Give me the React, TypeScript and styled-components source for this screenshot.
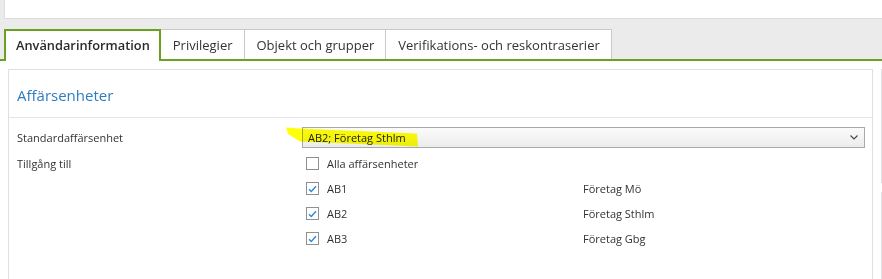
import React from 'react';
import styled, { createGlobalStyle } from 'styled-components';

const GlobalStyle = createGlobalStyle`
  html, body { margin: 0; padding: 0; background: #ffffff; }
  body {
    font-family: "Open Sans", "Noto Sans", sans-serif;
    color: #333333;
    width: 882px;
    height: 279px;
    overflow: hidden;
  }
`;

const Page = styled.div`
  width: 882px;
  height: 279px;
  overflow: hidden;
  background: #ffffff;
`;

const Header = styled.div`
  background: #ebebeb;
  display: flex;
  flex-direction: column;
`;

const TopCard = styled.div`
  margin-left: 4px;
  height: 18px;
  background: #ffffff;
  border-left: 1px solid #dcdcdc;
  border-bottom: 1px solid #dcdcdc;
`;

const TabBar = styled.div`
  display: flex;
  align-items: flex-end;
  padding: 10px 0 0 4px;
  border-bottom: 2px solid #6aa121;
`;

const Tab = styled.div<{ $active?: boolean }>`
  box-sizing: border-box;
  display: flex;
  align-items: center;
  background: #ffffff;
  font-size: 13px;
  white-space: nowrap;
  color: #333333;
  ${(p) =>
    p.$active
      ? `
    height: 32px;
    margin-bottom: -2px;
    padding: 0 9px 2px 10px;
    border: 2px solid #6aa121;
    border-bottom: none;
    font-weight: 600;
    font-size: 12.8px;
    color: #2b2b2b;
  `
      : `
    height: 30px;
    padding: 0 11px 0 12px;
    border-top: 1px solid #c9c9c9;
    border-right: 1px solid #c9c9c9;
  `}
`;

const Content = styled.div`
  display: flex;
  gap: 8px;
  padding: 8px 0 0 8px;
`;

const Panel = styled.section`
  box-sizing: border-box;
  width: 865px;
  flex: none;
  height: 230px;
  border: 1px solid #dde1e5;
  border-bottom: none;
`;

const PanelTitle = styled.h2`
  margin: 0;
  height: 48px;
  box-sizing: border-box;
  display: flex;
  align-items: center;
  padding: 2px 8px 0;
  font-size: 15px;
  font-weight: 400;
  color: #2f7dc0;
  border-bottom: 1px solid #e3e6e9;
`;

const SideColumn = styled.div`
  display: flex;
  flex-direction: column;
  gap: 9px;
  flex: 1;
`;

const SideBox = styled.div<{ $h: number }>`
  height: ${(p) => p.$h}px;
  border-left: 1px solid #dde1e5;
`;

const FormGrid = styled.div`
  display: grid;
  grid-template-columns: 285px 1fr;
  padding: 9px 7px 0 8px;
  row-gap: 3px;
`;

const Label = styled.div`
  font-size: 11px;
  line-height: 21px;
  color: #333333;
`;

const LabelTop = styled(Label)`
  line-height: 25px;
`;

const SelectWrap = styled.div`
  position: relative;
`;

const Select = styled.div`
  box-sizing: border-box;
  height: 21px;
  display: flex;
  align-items: center;
  justify-content: space-between;
  padding: 0 6px 0 5px;
  border: 1px solid #a9a9a9;
  background: linear-gradient(#fbfbfb, #ececec);
  font-size: 11px;
  color: #222222;
`;

const Highlight = styled.svg`
  position: absolute;
  left: -16px;
  top: 0px;
  width: 140px;
  height: 22px;
  mix-blend-mode: multiply;
  pointer-events: none;
`;

const CheckList = styled.div`
  display: flex;
  flex-direction: column;
`;

const CheckRow = styled.div`
  display: grid;
  grid-template-columns: 277px 1fr;
  align-items: center;
  height: 25px;
  padding-left: 4px;
  font-size: 11px;
  color: #333333;
`;

const CheckCell = styled.div`
  display: flex;
  align-items: center;
  gap: 8px;
`;

const Box = styled.span`
  box-sizing: border-box;
  width: 13px;
  height: 13px;
  border: 1px solid #8f8f8f;
  background: #ffffff;
  display: flex;
  align-items: center;
  justify-content: center;
`;

const Check = ({ checked }: { checked: boolean }) => (
  <Box>
    {checked && (
      <svg width="9" height="8" viewBox="0 0 9 8">
        <path d="M1 4.2 L3.3 6.5 L8 1.2" fill="none" stroke="#2a8ad8" strokeWidth="1.4" />
      </svg>
    )}
  </Box>
);

const units = [
  { code: 'AB1', name: 'Företag Mö' },
  { code: 'AB2', name: 'Företag Sthlm' },
  { code: 'AB3', name: 'Företag Gbg' },
];

export default function App() {
  return (
    <Page>
      <GlobalStyle />
      <Header>
        <TopCard />
        <TabBar>
          <Tab $active>Användarinformation</Tab>
          <Tab>Privilegier</Tab>
          <Tab>Objekt och grupper</Tab>
          <Tab>Verifikations- och reskontraserier</Tab>
        </TabBar>
      </Header>
      <Content>
        <Panel>
          <PanelTitle>Affärsenheter</PanelTitle>
          <FormGrid>
            <Label>Standardaffärsenhet</Label>
            <SelectWrap>
              <Select>
                <span>AB2; Företag Sthlm</span>
                <svg width="8" height="5" viewBox="0 0 8 5">
                  <path d="M0.5 0.5 L4 4 L7.5 0.5" fill="none" stroke="#444" strokeWidth="1.1" />
                </svg>
              </Select>
              <Highlight viewBox="0 0 140 22">
                <path d="M0 0.5 L14 1.5 L131 6.5 L132 19.5 L14 14.5 L2 7 Z" fill="#ffff00" opacity="0.95" />
              </Highlight>
            </SelectWrap>
            <LabelTop>Tillgång till</LabelTop>
            <CheckList>
              <CheckRow>
                <CheckCell>
                  <Check checked={false} />
                  <span>Alla affärsenheter</span>
                </CheckCell>
              </CheckRow>
              {units.map((u) => (
                <CheckRow key={u.code}>
                  <CheckCell>
                    <Check checked />
                    <span>{u.code}</span>
                  </CheckCell>
                  <span>{u.name}</span>
                </CheckRow>
              ))}
            </CheckList>
          </FormGrid>
        </Panel>
        <SideColumn>
          <SideBox $h={114} />
          <SideBox $h={100} />
        </SideColumn>
      </Content>
    </Page>
  );
}
